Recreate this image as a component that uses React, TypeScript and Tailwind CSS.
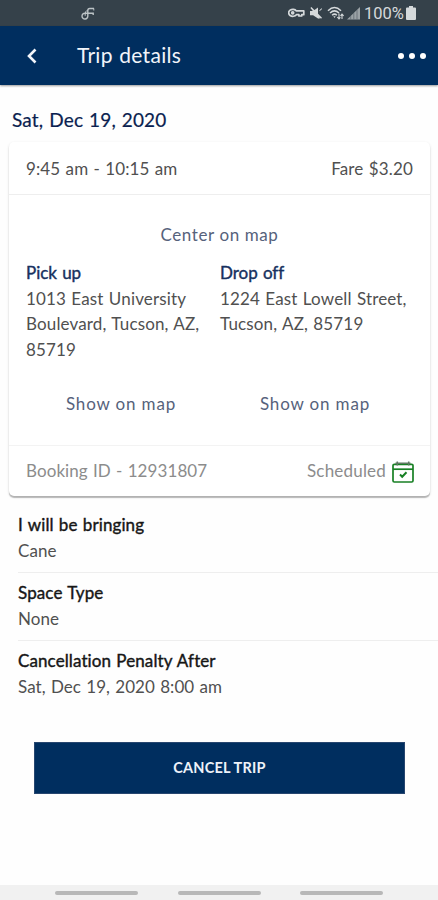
import React from 'react';

interface Stop {
  label: string;
  lines: string[];
}

const stops: Stop[] = [
  { label: 'Pick up', lines: ['1013 East University', 'Boulevard, Tucson, AZ,', '85719'] },
  { label: 'Drop off', lines: ['1224 East Lowell Street,', 'Tucson, AZ, 85719'] },
];

const details = [
  { title: 'I will be bringing', value: 'Cane' },
  { title: 'Space Type', value: 'None' },
  { title: 'Cancellation Penalty After', value: 'Sat, Dec 19, 2020 8:00 am' },
];

const StatusBar: React.FC = () => (
  <div className="flex h-[26px] items-center justify-between bg-[#35414a] pl-[81px] pr-[22px] text-[#d5d9db]">
    <svg className="mt-[2px]" width="14" height="14" viewBox="0 0 14 14" fill="none" stroke="#bcc3c6" strokeWidth="1.4">
      <path d="M13 1.5H8.8Q6.8 1.5 6.8 3.5V8.8A2.9 2.9 0 1 1 3.9 6.2H12.2V8" />
      <path d="M12.8 1.5V3.5M6.8 3.5Q3.8 3.5 4.2 8.8" strokeWidth="1" />
    </svg>
    <div className="flex items-center">
      <svg width="17" height="14" viewBox="0 0 17 14" fill="none" stroke="currentColor" strokeWidth="1.7">
        <path d="M8.4 4.9H15.8V8.7H13.7V10H10.9V8.7H8.4A4.2 3.5 0 1 1 8.4 4.9Z" strokeLinejoin="round" />
        <circle cx="4.7" cy="6.8" r="1" />
      </svg>
      <svg className="ml-[5px]" width="12" height="14" viewBox="0 0 12 14" fill="currentColor">
        <path d="M0 5h3.1L8 1.4v8.2L10 12 8.8 13 1.5 3.2 .4 2.1 1.4 1 12 11.8l-1 1L8 9.8v2.8L3.1 9.2H0z" />
        <path d="M9.4 4.2 11.8 2v1.2L9.6 5.3z" />
      </svg>
      <svg className="ml-[5px]" width="18" height="15" viewBox="0 0 18 15" fill="none" stroke="currentColor" strokeWidth="1.5">
        <path d="M1 4.7Q7.5-1.7 14 4.7M3 7Q7.5 2.7 12 7M5.1 9.2Q7.5 7 9.9 9.2" />
        <path d="M6.3 10.2h2.4L7.5 12z" fill="currentColor" stroke="none" />
        <path d="M12 7.5v5.2M10.3 11l1.7 2 1.4-1.6M15 13V8.2M13.5 9.8 15 8l1.6 1.8" strokeWidth="1.1" />
      </svg>
      <svg className="ml-[2px]" width="14" height="13" viewBox="0 0 14 13">
        <path d="M0 12.5 13 0v12.5z" fill="#9ba2a6" />
        <path d="M3.7 9v3.5M6.8 6v6.5M10 3v9.5" stroke="#59636a" strokeWidth=".7" />
      </svg>
      <span className="ml-[3px] mt-[2px] w-[42px] whitespace-nowrap font-['Roboto','Liberation_Sans',sans-serif] text-[16.5px] leading-[26px]">100%</span>
      <svg width="10" height="14" viewBox="0 0 10 14" fill="currentColor">
        <path d="M3 0h4v1.5H9q1 0 1 1V13q0 1-1 1H1q-1 0-1-1V2.5q0-1 1-1h2z" />
      </svg>
    </div>
  </div>
);

const App: React.FC = () => (
  <div className="flex h-[900px] w-[438px] flex-col bg-[#fefefe] font-['Lato','Open_Sans',sans-serif] text-[17px] text-[#505050] [font-variant-ligatures:none] [word-spacing:0.8px]">
    <StatusBar />

    {/* Header */}
    <header className="flex h-[59px] items-center bg-[#002e5f] pl-[26px] pr-[12px] text-[#f2f5fa] shadow-[0_1px_2px_rgba(0,0,0,0.4)]">
      <button>
        <svg width="11" height="16" viewBox="0 0 11 16" fill="none" stroke="currentColor" strokeWidth="2.6">
          <path d="M9.5 1.5 3 8 9.5 14.5" />
        </svg>
      </button>
      <h1 className="-mt-px ml-[40px] text-[21px] leading-[30px] tracking-[0.3px]">Trip details</h1>
      <button className="ml-auto flex gap-[5px]">
        <span className="size-[6px] rounded-full bg-white" />
        <span className="size-[6px] rounded-full bg-white" />
        <span className="size-[6px] rounded-full bg-white" />
      </button>
    </header>

    <main className="flex-1">
      <h2 className="mt-[21px] pl-[12px] text-[19px] leading-7 tracking-[0.18px] text-[#0b1f50] [-webkit-text-stroke:0.2px_#0b1f50]">
        Sat, Dec 19, 2020
      </h2>

      {/* Trip card */}
      <section className="ml-[9px] mr-[8px] mt-[8px] h-[354px] rounded-[5px] bg-white shadow-[0_2px_1px_rgba(0,0,0,0.24),0_1px_3px_rgba(0,0,0,0.12)]">
        <div className="flex h-[53px] items-center justify-between border-b border-[#eeeeee] px-[17px] pt-[2px]">
          <span className="tracking-[0.12px]">9:45 am - 10:15 am</span>
          <span className="tracking-[0.15px]">Fare $3.20</span>
        </div>
        <div className="h-[251px] border-b border-[#f3f3f3]">
          <div className="flex justify-center pt-[27px] leading-[26px]">
            <button className="tracking-[0.6px] text-[#56627b]">Center on map</button>
          </div>
          <div className="mt-[12px] flex pl-[17px] leading-[25.7px]">
            {stops.map((stop) => (
              <div key={stop.label} className="flex h-[157px] w-[194px] flex-col">
                <h3 className="text-[#17315f] [-webkit-text-stroke:0.4px_#17315f]">{stop.label}</h3>
                {stop.lines.map((line) => (
                  <p key={line} className="whitespace-nowrap tracking-[0.15px]">{line}</p>
                ))}
                <button className="mt-auto w-[190px] tracking-[0.85px] text-[#56627b]">Show on map</button>
              </div>
            ))}
          </div>
        </div>
        <div className="flex h-[50px] items-center pl-[17px] pr-[16px] text-[#8c8c8c]">
          <span className="tracking-[0.08px]">Booking ID - 12931807</span>
          <span className="ml-auto tracking-[0.2px]">Scheduled</span>
          <svg className="ml-[6px] mt-[2px]" width="22" height="22" viewBox="0 0 22 22" fill="none" stroke="#188024" strokeWidth="1.7">
            <rect x="1" y="3.3" width="20" height="17.7" rx="1.3" />
            <path d="M1 8.2h20" />
            <path d="M3.5 2.3h15M5.3 .5v4M16.7 .5v4" stroke="#5f7863" strokeWidth="1.5" />
            <path d="m8 13.500 2.200 2.200 4.300-4.500" strokeWidth="2" />
          </svg>
        </div>
      </section>

      {/* Extra details */}
      <section className="pl-[18px] pt-[9px]">
        {details.map((item) => (
          <div key={item.title} className="h-[68px] border-b border-[#eeeeee] pt-[7px] leading-[26px] last:border-b-0">
            <h3 className="tracking-[0.1px] text-[#161616] [-webkit-text-stroke:0.4px_#161616]">{item.title}</h3>
            <p className="tracking-[0.07px]">{item.value}</p>
          </div>
        ))}
      </section>

      <button className="ml-[34px] mt-[33px] block h-[52px] w-[371px] border border-[#27466f] bg-[#002e5f] text-[14.5px] font-bold tracking-[0.2px] text-[#edf2f9]">
        CANCEL TRIP
      </button>
    </main>

    <nav className="flex h-[15px] items-center justify-between bg-[#f1f1f1] pl-[55px] pr-[55px]">
      <span className="h-[4px] w-[83px] rounded-full bg-[#b8b8b8]" />
      <span className="h-[4px] w-[83px] rounded-full bg-[#b8b8b8]" />
      <span className="h-[4px] w-[83px] rounded-full bg-[#b8b8b8]" />
    </nav>
  </div>
);

export default App;
